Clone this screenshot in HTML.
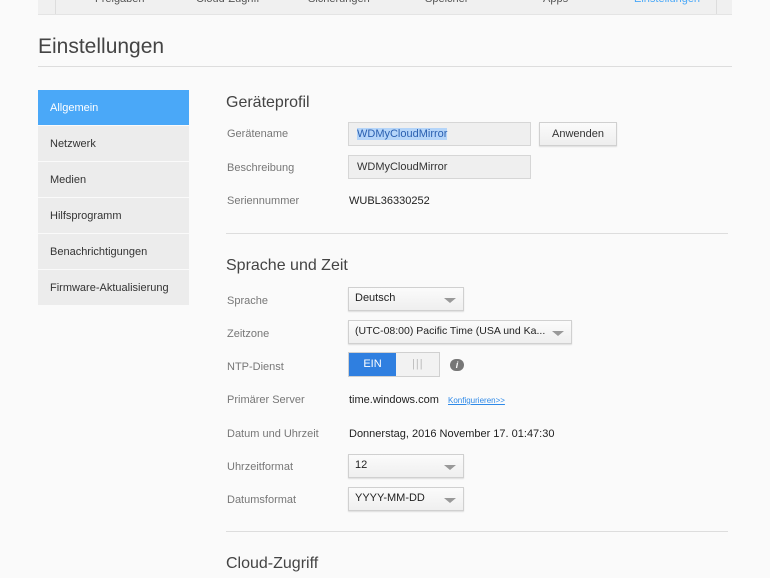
<!DOCTYPE html>
<html><head><meta charset="utf-8"><style>
body{margin:0;width:770px;height:578px;background:#fafafa;font-family:"Liberation Sans",sans-serif;position:relative;overflow:hidden;color:#333}
.a{position:absolute;white-space:nowrap}
.nav{position:absolute;left:38px;top:-2px;width:694px;height:16px;background:#f0f0f0;border-bottom:1px solid #e4e4e4}
.navi{position:absolute;left:55px;top:-2px;width:660px;height:16px;border-left:1px solid #ddd;border-right:1px solid #ddd}
.nt{position:absolute;top:-7px;font-size:11px;color:#555}
.side{position:absolute;left:38px;width:151px;height:35px;background:#ececec;font-size:11px;color:#333;line-height:37px;text-indent:12px;border-bottom:1px solid #fafafa}
.lbl{position:absolute;left:227px;font-size:11px;color:#777}
.val{position:absolute;left:349px;font-size:11px;color:#222}
.inp{position:absolute;left:348px;width:181px;height:22px;background:#efefef;border:1px solid #d6d6d6;font-size:11px;line-height:22px;text-indent:8px;color:#333}
.sel{position:absolute;left:348px;height:22px;background:linear-gradient(#fbfbfb,#efefef);border:1px solid #d0d0d0;font-size:11px;line-height:20px;text-indent:6px;color:#222;box-shadow:0 1px 1px #ddd;overflow:hidden}
.sel:after{content:"";position:absolute;right:7px;top:10px;border:6px solid transparent;border-top:5px solid #999}
.h{position:absolute;left:226px;font-size:16px;color:#444}
.hr{position:absolute;left:226px;width:502px;height:1px;background:#ddd}
</style></head><body>
<div class="nav"></div><div class="navi"></div>
<div class="nt" style="left:95px">Freigaben</div>
<div class="nt" style="left:196px">Cloud-Zugriff</div>
<div class="nt" style="left:308px">Sicherungen</div>
<div class="nt" style="left:425px">Speicher</div>
<div class="nt" style="left:543px">Apps</div>
<div class="nt" style="left:634px;color:#4aa8f8">Einstellungen</div>

<div class="a" style="left:38px;top:35px;font-size:21px;color:#444">Einstellungen</div>
<div class="a" style="left:38px;top:66px;width:694px;height:1px;background:#ddd"></div>

<div class="side" style="top:90px;background:#4aa8f8;color:#fff">Allgemein</div>
<div class="side" style="top:126px">Netzwerk</div>
<div class="side" style="top:162px">Medien</div>
<div class="side" style="top:198px">Hilfsprogramm</div>
<div class="side" style="top:234px">Benachrichtigungen</div>
<div class="side" style="top:270px">Firmware-Aktualisierung</div>

<div class="h" style="top:94px">Geräteprofil</div>
<div class="lbl" style="top:128px">Gerätename</div>
<div class="inp" style="top:122px"><span style="background:#b5d5f9;color:#2a5fb0">WDMyCloudMirror</span></div>
<div class="a" style="left:539px;top:122px;width:76px;height:22px;border:1px solid #d0d0d0;background:linear-gradient(#fbfbfb,#eee);font-size:11px;line-height:22px;text-align:center;box-shadow:0 1px 1px #ddd">Anwenden</div>
<div class="lbl" style="top:162px">Beschreibung</div>
<div class="inp" style="top:155px">WDMyCloudMirror</div>
<div class="lbl" style="top:195px">Seriennummer</div>
<div class="val" style="top:195px">WUBL36330252</div>
<div class="hr" style="top:233px"></div>

<div class="h" style="top:257px">Sprache und Zeit</div>
<div class="lbl" style="top:295px">Sprache</div>
<div class="sel" style="top:287px;width:114px">Deutsch</div>
<div class="lbl" style="top:328px">Zeitzone</div>
<div class="sel" style="top:320px;width:222px;font-size:10.5px">(UTC-08:00) Pacific Time (USA und Ka...</div>
<div class="lbl" style="top:361px">NTP-Dienst</div>
<div class="a" style="left:348px;top:352px;width:90px;height:23px;border:1px solid #d0d0d0;background:#f2f2f2"></div>
<div class="a" style="left:349px;top:353px;width:47px;height:23px;background:#2f7fe0;color:#fff;font-size:11px;line-height:23px;text-align:center">EIN</div>
<div class="a" style="left:412px;top:358px;font-size:11px;color:#bbb;letter-spacing:1px">|||</div>
<div class="a" style="left:450px;top:359px;width:14px;height:12px;border-radius:6px;background:#777;color:#fff;font-size:9px;font-style:italic;font-weight:bold;text-align:center;line-height:12px">i</div>
<div class="lbl" style="top:394px">Primärer Server</div>
<div class="val" style="top:394px">time.windows.com</div>
<div class="a" style="left:448px;top:396px;font-size:8px;color:#2f8ae8;text-decoration:underline">Konfigurieren&gt;&gt;</div>
<div class="lbl" style="top:428px">Datum und Uhrzeit</div>
<div class="val" style="top:428px">Donnerstag, 2016 November 17. 01:47:30</div>
<div class="lbl" style="top:461px">Uhrzeitformat</div>
<div class="sel" style="top:454px;width:114px">12</div>
<div class="lbl" style="top:494px">Datumsformat</div>
<div class="sel" style="top:487px;width:114px">YYYY-MM-DD</div>
<div class="hr" style="top:531px"></div>

<div class="h" style="top:555px">Cloud-Zugriff</div>
</body></html>
